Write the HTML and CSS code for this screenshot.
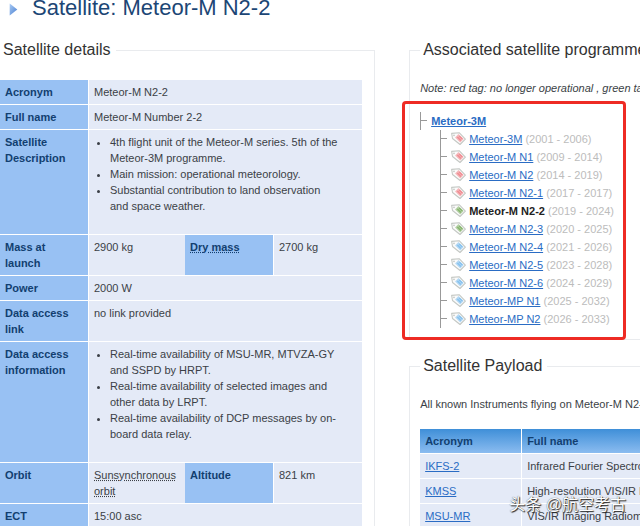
FILE: index.html
```html
<!DOCTYPE html>
<html lang="en">

<head>
    <meta charset="UTF-8">
    <meta name="viewport" content="width=device-width, initial-scale=1.0">
    <title>Satellite: Meteor-M N2-2</title>
    <link rel="stylesheet" href="styles.css">
</head>

<body>
    <svg width="0" height="0" class="defs">
        <symbol id="tag" viewBox="0 0 14 12">
            <path d="M0.6 1.2 L7.6 0.6 L13.4 6.6 L8.4 11.6 L1.4 6 Z" fill="#fbfbfb" stroke="#c4c8c4" stroke-width="1" stroke-linejoin="round" />
            <path d="M7 1.8 L11.8 6.4 L8.6 9.8 L3.8 5 Z" fill="currentColor" opacity="0.6" />
            <path d="M6 4.6 L9.2 7.8 M7.6 3.6 L10.6 6.4" stroke="currentColor" stroke-width="1.2" />
            <circle cx="2.8" cy="3" r="0.8" fill="#c4c8c4" />
        </symbol>
    </svg>

    <h1>
        <svg class="arrow" viewBox="0 0 8 12">
            <defs>
                <linearGradient id="arrowFill" x1="0" y1="0" x2="1" y2="1">
                    <stop offset="0" stop-color="#a9cbf5" />
                    <stop offset="1" stop-color="#4a7fd0" />
                </linearGradient>
            </defs>
            <path d="M0.5 0.5 L7.5 6 L0.5 11.5 Z" fill="url(#arrowFill)" />
        </svg>
        Satellite: Meteor-M N2-2
    </h1>

    <main class="columns">
        <fieldset class="details">
            <legend>Satellite details</legend>
            <table class="data">
                <colgroup>
                    <col class="col-label">
                    <col class="col-value">
                    <col class="col-label2">
                    <col>
                </colgroup>
                <tr>
                    <th scope="row">Acronym</th>
                    <td colspan="3">Meteor-M N2-2</td>
                </tr>
                <tr>
                    <th scope="row">Full name</th>
                    <td colspan="3">Meteor-M Number 2-2</td>
                </tr>
                <tr>
                    <th scope="row">Satellite Description</th>
                    <td colspan="3">
                        <ul>
                            <li>4th flight unit of the Meteor-M series. 5th of the Meteor-3M programme.</li>
                            <li>Main mission: operational meteorology.</li>
                            <li>Substantial contribution to land observation and space weather.</li>
                        </ul>
                    </td>
                </tr>
                <tr>
                    <th scope="row">Mass at launch</th>
                    <td>2900 kg</td>
                    <th scope="row"><abbr>Dry mass</abbr></th>
                    <td>2700 kg</td>
                </tr>
                <tr>
                    <th scope="row">Power</th>
                    <td colspan="3">2000 W</td>
                </tr>
                <tr>
                    <th scope="row">Data access link</th>
                    <td colspan="3">no link provided</td>
                </tr>
                <tr>
                    <th scope="row">Data access information</th>
                    <td colspan="3">
                        <ul>
                            <li>Real-time availability of MSU-MR, MTVZA-GY and SSPD by HRPT.</li>
                            <li>Real-time availability of selected images and other data by LRPT.</li>
                            <li>Real-time availability of DCP messages by on-board data relay.</li>
                        </ul>
                    </td>
                </tr>
                <tr>
                    <th scope="row">Orbit</th>
                    <td><abbr>Sunsynchronous orbit</abbr></td>
                    <th scope="row">Altitude</th>
                    <td>821 km</td>
                </tr>
                <tr>
                    <th scope="row">ECT</th>
                    <td colspan="3">15:00 asc</td>
                </tr>
            </table>
        </fieldset>

        <div class="side">
            <fieldset>
                <legend>Associated satellite programme</legend>
                <p class="note">Note: red tag: no longer operational , green tag: operational</p>
                <div class="tree">
                    <div class="root"><a href="#">Meteor-3M</a></div>
                    <ul>
                        <li><svg class="tag red"><use href="#tag" /></svg><a href="#">Meteor-3M</a> (2001 - 2006)</li>
                        <li><svg class="tag red"><use href="#tag" /></svg><a href="#">Meteor-M N1</a> (2009 - 2014)</li>
                        <li><svg class="tag red"><use href="#tag" /></svg><a href="#">Meteor-M N2</a> (2014 - 2019)</li>
                        <li><svg class="tag red"><use href="#tag" /></svg><a href="#">Meteor-M N2-1</a> (2017 - 2017)</li>
                        <li><svg class="tag green"><use href="#tag" /></svg><strong>Meteor-M N2-2</strong> (2019 - 2024)</li>
                        <li><svg class="tag green"><use href="#tag" /></svg><a href="#">Meteor-M N2-3</a> (2020 - 2025)</li>
                        <li><svg class="tag blue"><use href="#tag" /></svg><a href="#">Meteor-M N2-4</a> (2021 - 2026)</li>
                        <li><svg class="tag blue"><use href="#tag" /></svg><a href="#">Meteor-M N2-5</a> (2023 - 2028)</li>
                        <li><svg class="tag blue"><use href="#tag" /></svg><a href="#">Meteor-M N2-6</a> (2024 - 2029)</li>
                        <li><svg class="tag blue"><use href="#tag" /></svg><a href="#">Meteor-MP N1</a> (2025 - 2032)</li>
                        <li><svg class="tag blue"><use href="#tag" /></svg><a href="#">Meteor-MP N2</a> (2026 - 2033)</li>
                    </ul>
                    <div class="highlight"></div>
                </div>
            </fieldset>

            <fieldset>
                <legend>Satellite Payload</legend>
                <p class="intro">All known Instruments flying on Meteor-M N2-2</p>
                <table class="data payload">
                    <thead>
                        <tr>
                            <th scope="col">Acronym</th>
                            <th scope="col">Full name</th>
                        </tr>
                    </thead>
                    <tbody>
                        <tr>
                            <td><a href="#">IKFS-2</a></td>
                            <td>Infrared Fourier Spectrometer - 2</td>
                        </tr>
                        <tr>
                            <td><a href="#">KMSS</a></td>
                            <td>High-resolution VIS/IR Radiometer</td>
                        </tr>
                        <tr>
                            <td><a href="#">MSU-MR</a></td>
                            <td>VIS/IR Imaging Radiometer</td>
                        </tr>
                    </tbody>
                </table>
            </fieldset>
        </div>
    </main>

    <div class="watermark" lang="zh">头条 @航空考古</div>
</body>

</html>
```
FILE: styles.css
```css
body {
    margin: 0;
    min-height: 100vh;
    position: relative;
    overflow: hidden;
    font-family: "Liberation Sans", Arial, sans-serif;
    font-size: 11px;
    line-height: 16px;
    color: #3b3f46;
    background-color: #fff;
}

a {
    color: #2a6cc4;
}

.defs {
    position: absolute;
}

h1 {
    display: flex;
    align-items: center;
    gap: 14px;
    margin: 0;
    padding-left: 9px;
    font-size: 22px;
    line-height: 16px;
    font-weight: normal;
    color: #1c4675;
}

.arrow {
    width: 9px;
    height: 13px;
    padding-top: 3px;
}

.columns {
    display: grid;
    grid-template-columns: minmax(0, 13fr) minmax(0, 8fr);
    column-gap: 34px;
    padding-top: 24px;
}

fieldset {
    min-width: 0;
    margin: 0;
    padding: 0 0 0 10px;
    border: 1px solid #e9ebee;
    border-right: none;
}

legend {
    padding: 0 5px 0 3px;
    font-size: 16px;
    line-height: 20px;
    color: #333;
}

.details {
    padding: 19px 12px 0 0;
    border-left: none;
    border-right: 1px solid #e9ebee;
}

/* tables */
.data {
    width: 100%;
    table-layout: fixed;
    border-collapse: separate;
    border-spacing: 0 1px;
}

.data th,
.data td {
    padding: 4px 5px;
    vertical-align: top;
    text-align: left;
    background-color: #e4eaf7;
}

.data th {
    background-color: #98c1f3;
    color: #123f70;
}

.data td {
    border-left: 1px solid #fff;
}

.col-label {
    width: 88px;
}

.col-value {
    width: 97px;
}

.col-label2 {
    width: 88px;
}

.data ul {
    margin: 0 0 16px;
    padding: 0 18px 0 16px;
}

abbr {
    text-decoration: underline dotted;
}

/* programme tree */
.side {
    white-space: nowrap;
}

.note {
    margin: 20px 0 16px;
    font-style: italic;
}

.tree {
    position: relative;
    padding-bottom: 11px;
    color: #bcbcbc;
}

.root {
    border-left: 1px solid #999;
    line-height: 18px;
    font-weight: bold;
}

.root::before,
.tree li::before {
    content: "";
    display: inline-block;
    width: 6px;
    margin-right: 4px;
    border-top: 1px solid #999;
    vertical-align: 4px;
}

.tree ul {
    margin: 0 0 0 20px;
    padding: 0;
    list-style: none;
    border-left: 1px solid #999;
}

.tree li {
    line-height: 18px;
}

.tree strong {
    color: #222;
}

.tag {
    width: 15px;
    height: 13px;
    margin-right: 3px;
    vertical-align: -2px;
}

.red {
    color: #f08a90;
}

.green {
    color: #86b46c;
}

.blue {
    color: #85c1ee;
}

.highlight {
    position: absolute;
    top: -11px;
    left: -18px;
    width: 218px;
    bottom: -1px;
    border: 3px solid #ee2b24;
    border-radius: 4px;
}

/* payload */
.side fieldset + fieldset {
    margin-top: 16px;
}

.intro {
    margin: 20px 0 16px;
}

.payload {
    width: 320px;
}

.payload th {
    background: linear-gradient(#3f8fd8, #8bbcf0);
}

.payload th:first-child {
    width: 91px;
}

.payload th + th {
    border-left: 1px solid #fff;
}

.payload td:first-child {
    border-left: none;
}

.watermark {
    position: absolute;
    right: 14px;
    bottom: 13px;
    font-family: "Liberation Sans", "Noto Sans CJK SC", sans-serif;
    font-size: 16px;
    line-height: 24px;
    color: #fff;
    text-shadow: 1px 1px 1px #222, 0 0 1px #444;
}
```
